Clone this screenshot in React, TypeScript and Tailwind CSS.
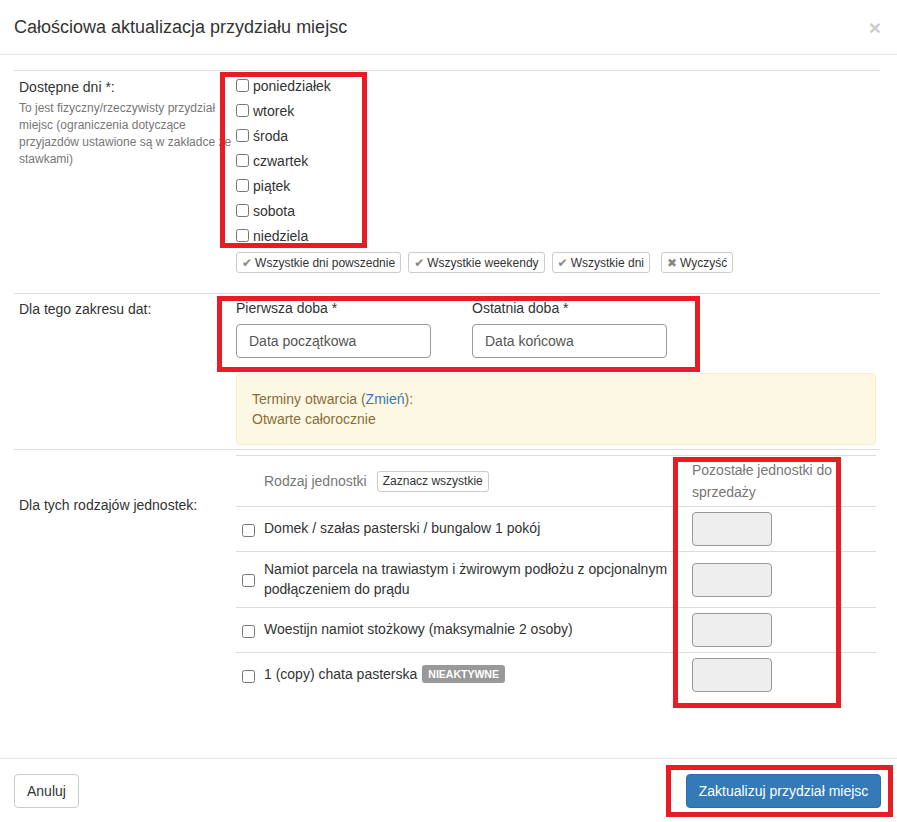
import React from "react";

const days = ["poniedziałek", "wtorek", "środa", "czwartek", "piątek", "sobota", "niedziela"];

const quickButtons = [
  { glyph: "✔", label: "Wszystkie dni powszednie" },
  { glyph: "✔", label: "Wszystkie weekendy" },
  { glyph: "✔", label: "Wszystkie dni" },
  { glyph: "✖", label: "Wyczyść" },
];

const units = [
  { name: "Domek / szałas pasterski / bungalow 1 pokój" },
  { name: "Namiot parcela na trawiastym i żwirowym podłożu z opcjonalnym podłączeniem do prądu" },
  { name: "Woestijn namiot stożkowy (maksymalnie 2 osoby)" },
  { name: "1 (copy) chata pasterska", inactive: true },
];

// annotation boxes drawn over the screenshot
const marks = [
  "left-[220px] top-[72px] w-[147px] h-[176px]",
  "left-[217px] top-[296px] w-[483px] h-[76px]",
  "left-[673px] top-[457px] w-[168px] h-[251px]",
  "left-[666px] top-[765px] w-[227px] h-[52px]",
];

const Checkbox = ({ className = "" }: { className?: string }) => (
  <input type="checkbox" className={`m-0 h-[13px] w-[13px] shrink-0 ${className}`} />
);

export default function App() {
  return (
    <div
      className="relative h-[822px] w-[897px] overflow-hidden bg-white text-[14px] leading-[20px] text-[#333]"
      style={{ fontFamily: '"Liberation Sans", Arial, sans-serif' }}
    >
      {/* header */}
      <div className="flex h-[55px] items-center justify-between border-b border-[#e5e5e5] pl-[14px] pr-[16px]">
        <h4 className="text-[18px] leading-[26px] text-[#333]">Całościowa aktualizacja przydziału miejsc</h4>
        <span className="text-[21px] font-bold leading-none text-black opacity-20">×</span>
      </div>

      {/* body */}
      <div className="h-[703px] pl-[14px] pr-[17px] pt-[15px]">
        {/* row 1 */}
        <div className="grid grid-cols-[217px_1fr] border-t border-[#ddd]">
          <div className="pl-[5px] pt-[6px]">
            <div className="whitespace-nowrap">Dostępne dni *:</div>
            <p className="mt-[3px] w-[215px] text-[12px] leading-[17px] text-[#777]">
              To jest fizyczny/rzeczywisty przydział miejsc (ograniczenia dotyczące przyjazdów ustawione są w zakładce ze stawkami)
            </p>
          </div>
          <div className="relative bg-white pl-[5px] pt-[2px] pb-[20px]">
            <div className="flex flex-col">
              {days.map((d) => (
                <label key={d} className="flex h-[25px] items-center gap-[4px]">
                  <Checkbox />
                  <span>{d}</span>
                </label>
              ))}
            </div>
            <div className="mt-[4px] flex">
              {quickButtons.map((b, i) => (
                <button
                  key={b.label}
                  className={`flex h-[21px] items-center gap-[3px] rounded-[3px] border border-[#ccc] bg-white px-[5px] text-[12px] leading-[18px] text-[#333] ${
                    i === 3 ? "ml-[11px]" : i > 0 ? "ml-[7px]" : ""
                  }`}
                >
                  <span className="text-[12px] text-[#888]" style={{ fontFamily: '"DejaVu Sans", sans-serif' }}>
                    {b.glyph}
                  </span>
                  {b.label}
                </button>
              ))}
            </div>
          </div>
        </div>

        {/* row 2 */}
        <div className="grid grid-cols-[217px_1fr] border-t border-[#ddd]">
          <div className="pl-[5px] pt-[5px]">Dla tego zakresu dat:</div>
          <div className="pl-[5px] pt-[4px] pb-[4px] pr-[4px]">
            <div className="flex gap-[41px]">
              <div className="w-[195px]">
                <div>Pierwsza doba *</div>
                <div className="mt-[6px] flex h-[34px] items-center rounded-[4px] border border-[#999] px-[12px] text-[#555]">
                  Data początkowa
                </div>
              </div>
              <div className="w-[195px]">
                <div>Ostatnia doba *</div>
                <div className="mt-[6px] flex h-[34px] items-center rounded-[4px] border border-[#999] px-[12px] text-[#555]">
                  Data końcowa
                </div>
              </div>
            </div>
            <div className="mt-[15px] rounded-[4px] border border-[#faebcc] bg-[#fcf8e3] p-[15px] text-[#8a6d3b]">
              <div>
                Terminy otwarcia (<span className="text-[#337ab7]">Zmień</span>):
              </div>
              <div>Otwarte całorocznie</div>
            </div>
          </div>
        </div>

        {/* row 3 */}
        <div className="grid grid-cols-[217px_1fr] border-t border-[#ddd]">
          <div className="pl-[5px] pt-[45px]">Dla tych rodzajów jednostek:</div>
          <div className="pl-[5px] pt-[5px] pr-[4px]">
            <div className="border-t border-[#ddd]">
              <div className="grid h-[50px] grid-cols-[28px_428px_1fr] items-center">
                <div />
                <div className="flex items-center gap-[10px] text-[#777]">
                  <span>Rodzaj jednostki</span>
                  <button className="h-[21px] rounded-[3px] border border-[#ccc] bg-white px-[5px] text-[12px] leading-[18px] text-[#333]">
                    Zaznacz wszystkie
                  </button>
                </div>
                <div className="leading-[22px] text-[#777]">
                  Pozostałe jednostki do
                  <br />
                  sprzedaży
                </div>
              </div>
              {units.map((u, i) => (
                <div
                  key={u.name}
                  className={`grid grid-cols-[28px_428px_1fr] items-center border-t border-[#ddd] py-[5px] ${
                    i === 1 ? "min-h-[56px]" : "min-h-[45px]"
                  }`}
                >
                  <div className="flex pl-[6px] pt-[2px]">
                    <Checkbox />
                  </div>
                  <div className="pr-[10px] pb-[2px]">
                    {u.name}
                    {u.inactive && (
                      <span className="ml-[5px] inline-block rounded-[3px] bg-[#999] px-[6px] py-[2px] align-[1px] text-[10.5px] font-bold leading-[14px] text-white">
                        NIEAKTYWNE
                      </span>
                    )}
                  </div>
                  <div>
                    <div className="h-[34px] w-[80px] rounded-[4px] border border-[#999] bg-[#eee]" />
                  </div>
                </div>
              ))}
            </div>
          </div>
        </div>
      </div>

      {/* footer */}
      <div className="flex h-[64px] items-center justify-between border-t border-[#e5e5e5] pl-[14px] pr-[16px]">
        <button className="h-[34px] rounded-[4px] border border-[#ccc] bg-white px-[12px] text-[#333]">Anuluj</button>
        <button className="h-[34px] w-[195px] rounded-[4px] border border-[#2e6da4] bg-[#337ab7] text-white">
          Zaktualizuj przydział miejsc
        </button>
      </div>

      {marks.map((m) => (
        <div key={m} className={`pointer-events-none absolute border-[5px] border-[#e81c24] ${m}`} />
      ))}
    </div>
  );
}
